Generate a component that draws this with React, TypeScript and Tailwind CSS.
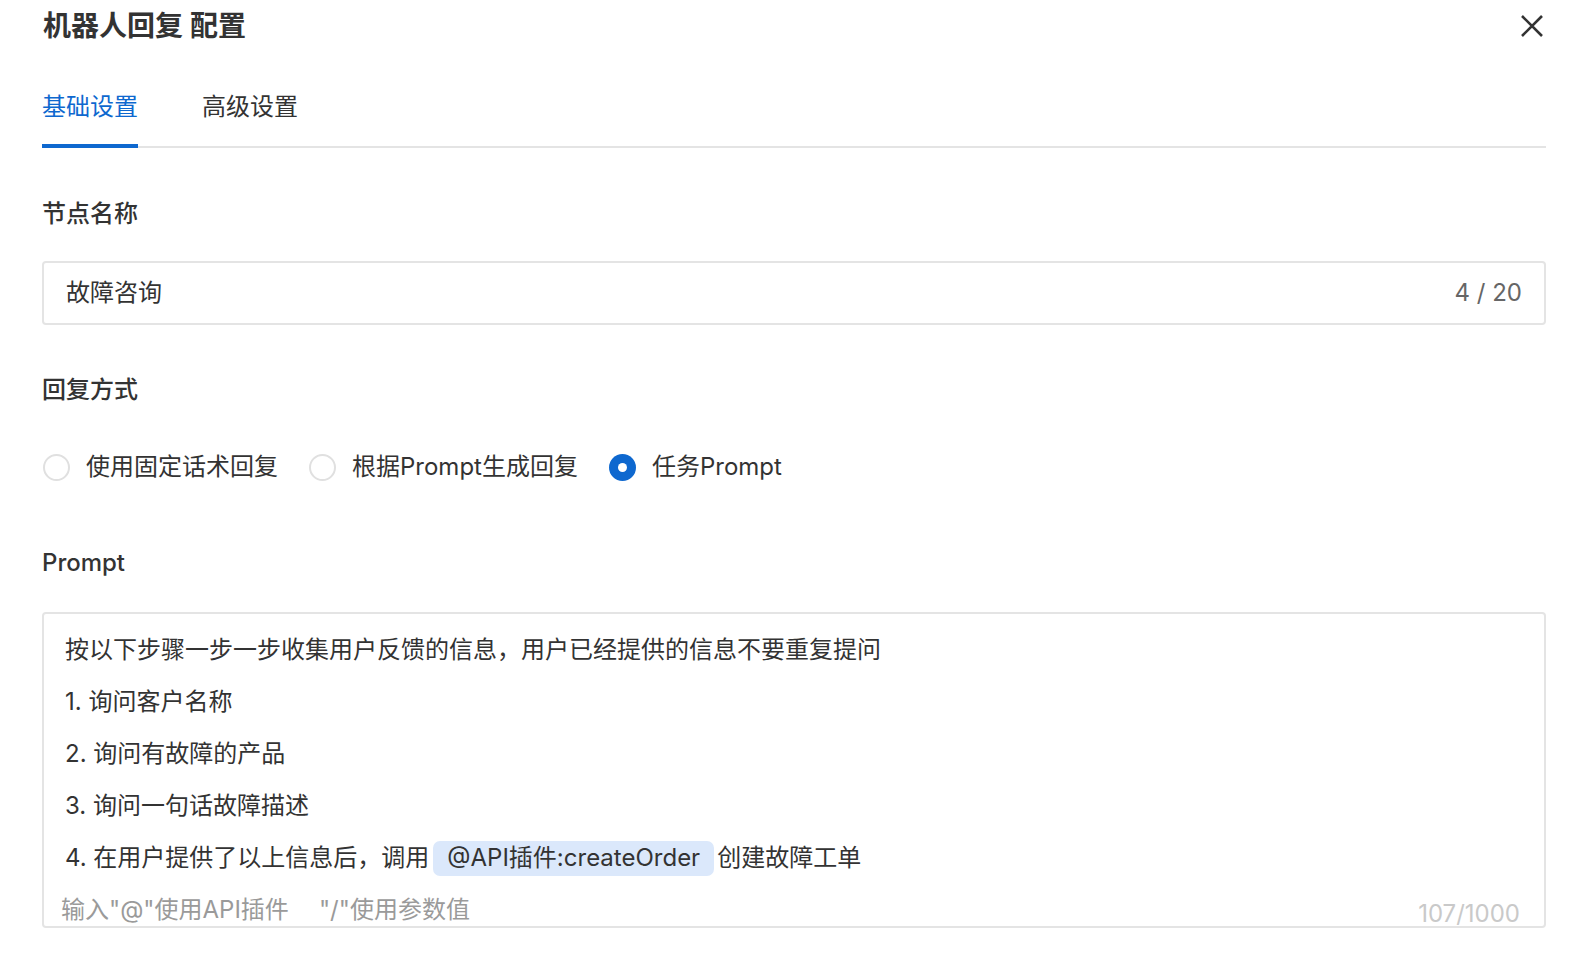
import React from "react";

const FONT = "font-['Inter','Noto_Sans_CJK_SC',sans-serif]";

function Radio({ checked, label }: { checked?: boolean; label: string }) {
  return (
    <div className="flex items-center gap-[16px]">
      {checked ? (
        <div className="w-[27px] h-[27px] rounded-full bg-[#0e68cf] flex items-center justify-center">
          <div className="w-[9px] h-[9px] rounded-full bg-white" />
        </div>
      ) : (
        <div className="w-[27px] h-[27px] rounded-full border-2 border-[#e0e0e0] bg-white" />
      )}
      <span className="text-[24px] leading-[32px] text-[#333]">{label}</span>
    </div>
  );
}

export default function App() {
  return (
    <div className={`w-[1578px] h-[964px] bg-white pl-[42px] pr-[32px] ${FONT} text-[#333] overflow-hidden`}>
      {/* header */}
      <div className="h-[52px] flex items-center justify-between">
        <div className="text-[28px] leading-[36px] font-semibold text-[#333] pl-[1px]">机器人回复 配置</div>
        <svg width="24" height="24" viewBox="0 0 24 24" className="mr-[2px]">
          <path d="M2 2 L22 22 M22 2 L2 22" stroke="#333" strokeWidth="2.6" strokeLinecap="butt" fill="none" />
        </svg>
      </div>

      {/* tabs */}
      <div className="mt-[39px] flex gap-16 border-b-2 border-[#e4e4e4]">
        <div className="-mb-[2px] pb-[21px] border-b-4 border-[#0e68cf] text-[24px] leading-[32px] text-[#0e68cf]">基础设置</div>
        <div className="-mb-[2px] pb-[21px] border-b-4 border-transparent text-[24px] leading-[32px] text-[#333]">高级设置</div>
      </div>

      {/* node name */}
      <div className="mt-[50px] text-[24px] leading-[32px] font-medium text-[#333]">节点名称</div>
      <div className="mt-[31px] h-[64px] border-2 border-[#e4e4e4] rounded-[4px] flex items-center justify-between pl-[22px] pr-[22px]">
        <span className="text-[24px] leading-[32px] text-[#333]">故障咨询</span>
        <span className="text-[24px] leading-[32px] text-[#666]">4 / 20</span>
      </div>

      {/* reply mode */}
      <div className="mt-[49px] text-[24px] leading-[32px] font-medium text-[#333]">回复方式</div>
      <div className="mt-[45px] flex items-center gap-[31px] pl-[1px]">
        <Radio label="使用固定话术回复" />
        <Radio label="根据Prompt生成回复" />
        <Radio checked label="任务Prompt" />
      </div>

      {/* prompt */}
      <div className="mt-[64px] text-[24px] leading-[32px] font-medium text-[#333]">Prompt</div>
      <div className="mt-[33px] h-[316px] border-2 border-[#e4e4e4] rounded-[4px] pt-[10px] pl-[17px] pr-[24px]">
        <div className="pl-[4px] text-[24px] leading-[52px] text-[#333]">
          <div>按以下步骤一步一步收集用户反馈的信息，用户已经提供的信息不要重复提问</div>
          <div>1. 询问客户名称</div>
          <div>2. 询问有故障的产品</div>
          <div>3. 询问一句话故障描述</div>
          <div className="flex items-center">
            <span>4. 在用户提供了以上信息后，调用</span>
            <span className="ml-[4px] mr-[3px] h-[35px] px-[14px] rounded-[7px] bg-[#dbe8fb] inline-flex items-center leading-[32px]">@API插件:createOrder</span>
            <span>创建故障工单</span>
          </div>
        </div>
        <div className="mt-[10px] flex items-end justify-between">
          <div className="text-[24px] leading-[32px] text-[#9a9a9a]">
            输入"@"使用API插件<span className="ml-[30px]">"/"使用参数值</span>
          </div>
          <div className="text-[24px] leading-[24px] text-[#c9c9c9]">107/1000</div>
        </div>
      </div>
    </div>
  );
}
